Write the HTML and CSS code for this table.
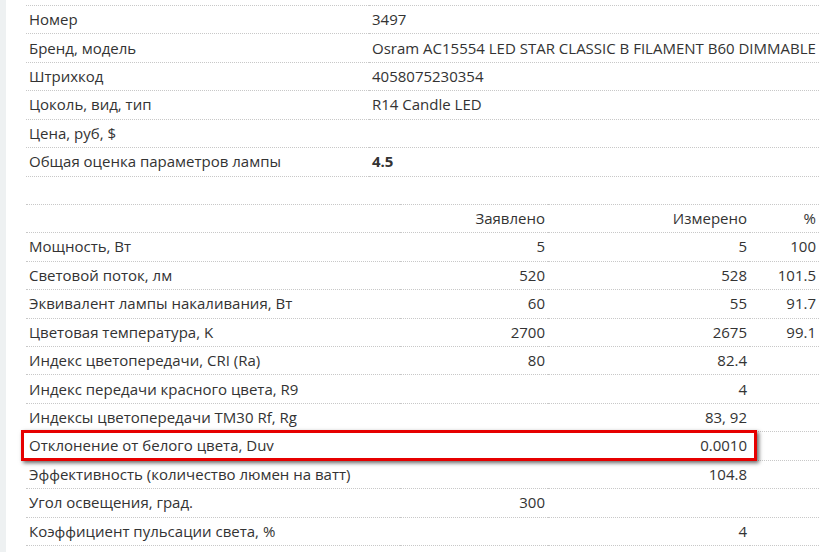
FILE: index.html
```html
<!DOCTYPE html>
<html lang="ru">
<head>
<meta charset="utf-8">
<link rel="stylesheet" href="styles.css">
</head>
<body>
<div class="page">
  <div class="strip"></div>
  <main class="content">
    <table class="info">
      <colgroup><col class="c-label1"><col></colgroup>
      <tbody>
        <tr><td>Номер</td><td>3497</td></tr>
        <tr><td>Бренд, модель</td><td class="nowrap">Osram AC15554 LED STAR CLASSIC B FILAMENT B60 DIMMABLE</td></tr>
        <tr><td>Штрихкод</td><td>4058075230354</td></tr>
        <tr><td>Цоколь, вид, тип</td><td>R14 Candle LED</td></tr>
        <tr><td>Цена, руб, $</td><td></td></tr>
        <tr class="last"><td>Общая оценка параметров лампы</td><td class="bold">4.5</td></tr>
      </tbody>
    </table>

    <div class="params-wrap">
      <table class="params">
        <colgroup><col class="c-label"><col class="c-decl"><col class="c-meas"><col class="c-pct"></colgroup>
        <tbody>
          <tr><td></td><td class="num">Заявлено</td><td class="num">Измерено</td><td class="num">%</td></tr>
          <tr><td>Мощность, Вт</td><td class="num">5</td><td class="num">5</td><td class="num">100</td></tr>
          <tr><td>Световой поток, лм</td><td class="num">520</td><td class="num">528</td><td class="num">101.5</td></tr>
          <tr><td>Эквивалент лампы накаливания, Вт</td><td class="num">60</td><td class="num">55</td><td class="num">91.7</td></tr>
          <tr><td>Цветовая температура, K</td><td class="num">2700</td><td class="num">2675</td><td class="num">99.1</td></tr>
          <tr><td>Индекс цветопередачи, CRI (Ra)</td><td class="num">80</td><td class="num">82.4</td><td></td></tr>
          <tr><td>Индекс передачи красного цвета, R9</td><td></td><td class="num">4</td><td></td></tr>
          <tr><td>Индексы цветопередачи TM30 Rf, Rg</td><td></td><td class="num">83, 92</td><td></td></tr>
          <tr><td>Отклонение от белого цвета, Duv</td><td></td><td class="num">0.0010</td><td></td></tr>
          <tr><td>Эффективность (количество люмен на ватт)</td><td></td><td class="num">104.8</td><td></td></tr>
          <tr><td>Угол освещения, град.</td><td class="num">300</td><td></td><td></td></tr>
          <tr class="last"><td>Коэффициент пульсации света, %</td><td></td><td class="num">4</td><td></td></tr>
        </tbody>
      </table>
      <div class="highlight"></div>
    </div>
  </main>
</div>
</body>
</html>
```

FILE: styles.css
```css
html, body {
  margin: 0;
  padding: 0;
  background: #fff;
}

body {
  font-family: "Open Sans", "Liberation Sans", sans-serif;
  font-size: 15px;
  color: #333;
}

.page {
  display: flex;
  min-height: 552px;
  overflow: hidden;
}

.strip {
  width: 6px;
  flex: none;
  background: #eef1f2;
}

.content {
  padding: 5px 0 0 20px;
  width: 793px;
  flex: none;
}

table {
  width: 793px;
  border-collapse: collapse;
  table-layout: fixed;
}

td {
  padding: 3.1px 3px 4.34px;
  line-height: 20px;
  border-top: 1px dotted #c8c8c8;
  vertical-align: middle;
  white-space: nowrap;
}

tr.last td {
  border-bottom: 1px dotted #c8c8c8;
}

.c-label1 { width: 343px; }

.nowrap { overflow: visible; }

.bold { font-weight: 700; }

.params-wrap {
  position: relative;
  margin-top: 27.4px;
}

.c-label { width: 374px; }
.c-decl { width: 148px; }
.c-meas { width: 202px; }
.c-pct { width: 69px; }

.num { text-align: right; }

.highlight {
  position: absolute;
  left: -5px;
  top: 226px;
  width: 730px;
  height: 25px;
  border: 3px solid #e60000;
  box-shadow: 2px 2px 4px rgba(0, 0, 0, 0.6);
  pointer-events: none;
}
```
